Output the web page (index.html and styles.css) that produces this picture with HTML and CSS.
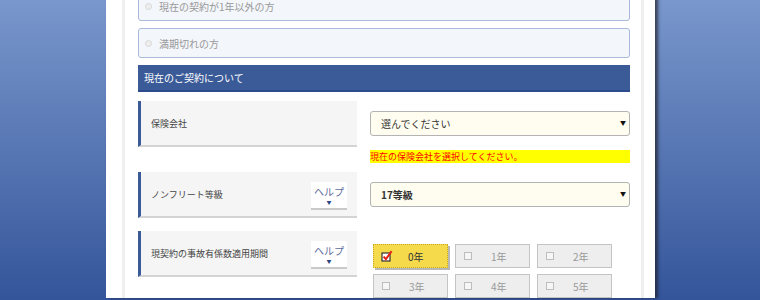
FILE: index.html
```html
<!DOCTYPE html>
<html lang="ja">
<head>
  <meta charset="UTF-8" />
  <meta name="viewport" content="width=device-width, initial-scale=1.0">
  <title>現在のご契約について</title>
  <link rel="stylesheet" href="styles.css">
</head>
<body>
  <div class="page">
    <div class="sheet">
      <label class="choice first"><span class="radio"></span>現在の契約が1年以外の方</label>
      <label class="choice"><span class="radio"></span>満期切れの方</label>

      <h3 class="section-title">現在のご契約について</h3>

      <div class="row with-error">
        <div class="row-label"><span>保険会社</span></div>
        <div class="row-field">
          <div class="select-wrap">
            <select name="company">
              <option>選んでください</option>
            </select>
          </div>
          <p class="error">現在の保険会社を選択してください。</p>
        </div>
      </div>

      <div class="row">
        <div class="row-label">
          <span>ノンフリート等級</span>
          <button type="button" class="help">ヘルプ<span class="help-arrow">▼</span></button>
        </div>
        <div class="row-field">
          <div class="select-wrap">
            <select name="grade" class="strong">
              <option>17等級</option>
            </select>
          </div>
        </div>
      </div>

      <div class="row">
        <div class="row-label">
          <span>現契約の事故有係数適用期間</span>
          <button type="button" class="help">ヘルプ<span class="help-arrow">▼</span></button>
        </div>
        <div class="row-field">
          <div class="checks">
            <div class="check selected">
              <svg class="box-on" width="12" height="12" viewBox="0 0 12 12">
                <rect x="1" y="3" width="8" height="8" fill="#fff" stroke="#333" stroke-width="1.2"/>
                <path d="M2.6 6.6 L4.9 9.2 L10.6 1.2" fill="none" stroke="#e8201a" stroke-width="2"/>
              </svg>
              <span>0年</span>
            </div>
            <div class="check"><span class="box"></span><span>1年</span></div>
            <div class="check"><span class="box"></span><span>2年</span></div>
            <div class="check"><span class="box"></span><span>3年</span></div>
            <div class="check"><span class="box"></span><span>4年</span></div>
            <div class="check"><span class="box"></span><span>5年</span></div>
          </div>
        </div>
      </div>
    </div>
  </div>
</body>
</html>
```

FILE: styles.css
```css
:root {
  --navy: #3a5a98;
  --line: #efefef;
  --label-bg: #f5f5f5;
}

* {
  margin: 0;
  padding: 0;
  box-sizing: border-box;
  font-family: "Noto Sans CJK JP", "Noto Sans", sans-serif;
}

body {
  height: 300px;
  overflow: hidden;
  background: linear-gradient(to bottom, #7997cc, #34559a);
}

.page {
  width: 549px;
  min-height: 300px;
  margin-left: 106px;
  padding: 0 11px 0 16px;
  background-color: #fff;
  box-shadow: 3px 0 3px rgba(30, 30, 40, 0.7);
}

.sheet {
  min-height: 300px;
  padding: 0 11px 0 13px;
  border-left: 3px solid var(--line);
  border-right: 3px solid var(--line);
}

.choice {
  display: flex;
  align-items: center;
  gap: 7px;
  height: 30px;
  margin-bottom: 7px;
  padding-left: 6px;
  border: 1px solid #aab9da;
  border-radius: 3px;
  background-color: #f3f6fb;
  color: #999;
  font-size: 10px;
}

.choice.first {
  margin-top: -9px;
}

.radio {
  width: 7px;
  height: 7px;
  border: 1px solid #d8d8d8;
  border-radius: 50%;
  background-color: #eee;
}

.section-title {
  display: flex;
  align-items: center;
  height: 27px;
  margin: 2px 0 9px;
  padding-left: 6px;
  background-color: var(--navy);
  border-bottom: 2px solid #2c4b8c;
  color: #fff;
  font-size: 10px;
  font-weight: 400;
}

.row {
  display: grid;
  grid-template-columns: 219px 260px;
  column-gap: 13px;
  align-items: start;
  margin-bottom: 13px;
}

.row.with-error {
  margin-bottom: 9px;
}

.row-label {
  display: flex;
  align-items: center;
  justify-content: space-between;
  height: 46px;
  padding: 0 10px;
  background-color: var(--label-bg);
  border-left: 3px solid var(--navy);
  border-bottom: 2px solid #d4d4d4;
  color: #444;
  font-size: 9px;
}

.help {
  display: flex;
  flex-direction: column;
  align-items: center;
  width: 36px;
  height: 28px;
  margin-top: 4px;
  padding-top: 4px;
  border: none;
  border-bottom: 2px solid #c9c9c9;
  background-color: #fff;
  color: #5d6d9c;
  font-size: 10px;
  line-height: 11px;
  cursor: pointer;
}

.help-arrow {
  margin-top: 2px;
  color: #2e4583;
  font-size: 5px;
  line-height: 6px;
}

.row-field {
  padding-top: 10px;
}

.select-wrap {
  position: relative;
}

.select-wrap::after {
  content: "▼";
  position: absolute;
  top: 8px;
  right: 4px;
  font-size: 6px;
  line-height: 8px;
  color: #111;
  pointer-events: none;
}

select {
  display: block;
  width: 260px;
  height: 25px;
  padding-left: 10px;
  border: 1px solid #b3b3b3;
  border-radius: 3px;
  background-color: #fffdf0;
  color: #333;
  font-size: 10px;
  appearance: none;
  -webkit-appearance: none;
}

select.strong {
  font-weight: 700;
}

.error {
  height: 13px;
  margin-top: 14px;
  background-color: #ff0;
  color: #f00;
  font-size: 9px;
  line-height: 13px;
}

.checks {
  display: grid;
  grid-template-columns: repeat(3, 75px);
  gap: 6px 7px;
  padding: 3px 0 0 3px;
}

.check {
  display: flex;
  align-items: center;
  gap: 19px;
  height: 24px;
  padding-left: 8px;
  border: 1px solid #c4c4c4;
  background-color: #eee;
  color: #999;
  font-size: 10px;
}

.check .box {
  width: 8px;
  height: 8px;
  border: 1px solid #bdbdbd;
  background-color: #f6f6f6;
}

.check.selected {
  gap: 15px;
  padding-left: 7px;
  border: 1px dotted #c9a823;
  background-color: #f5da4c;
  color: #333;
  box-shadow: 2px 2px 0 #b8b8b8;
}
```
